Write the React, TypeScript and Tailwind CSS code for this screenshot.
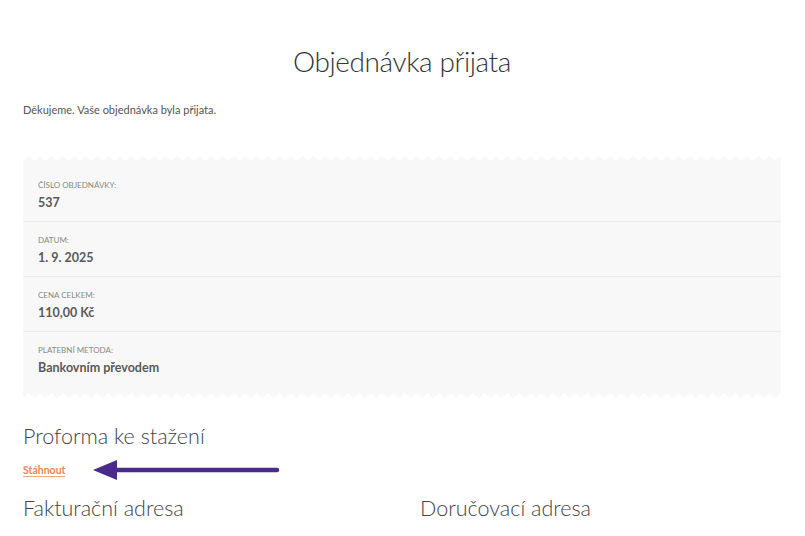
import React from "react";

function Zigzag({ flip }: { flip?: boolean }) {
  const w = 758;
  const p = 11.4;
  const n = Math.ceil(w / p);
  let d = `M0 6 `;
  for (let i = 0; i < n; i++) {
    const x0 = i * p;
    d += `L${(x0 + p / 2).toFixed(2)} 0.8 L${(x0 + p).toFixed(2)} 6 `;
  }
  d += `L${w} 6 Z`;
  return (
    <svg
      width={w}
      height={6}
      viewBox={`0 0 ${w} 6`}
      className={flip ? "block rotate-180" : "block"}
      preserveAspectRatio="none"
    >
      <path d={d} fill="#f8f8f8" />
    </svg>
  );
}

const rows = [
  { label: "Číslo objednávky:", value: "537" },
  { label: "Datum:", value: "1. 9. 2025" },
  { label: "Cena celkem:", value: "110,00 Kč" },
  { label: "Platební metoda:", value: "Bankovním převodem" },
];

export default function App() {
  return (
    <div
      className="relative w-[805px] h-[536px] overflow-hidden bg-white text-[#6d6d6d]"
      style={{ fontFamily: "Lato, 'Noto Sans', sans-serif" }}
    >
      <div className="pl-[23px] pr-[24px]">
        <h1 className="pt-[43px] text-center text-[28px] leading-[36px] font-light tracking-[-0.4px] text-[#333333]">
          Objednávka přijata
        </h1>
        <p className="mt-[23px] text-[11px] leading-[16px] text-[#555]">
          Děkujeme. Vaše objednávka byla přijata.
        </p>

        <div className="mt-[37px] w-[758px]">
          <Zigzag />
          <div className="bg-[#f8f8f8] py-[6px] px-[15px]">
            {rows.map((r, i) => (
              <div
                key={r.label}
                className={
                  "pt-[12px] pb-[10px] h-[55px] " +
                  (i < rows.length - 1 ? "border-b border-[#ececec] -mx-[15px] px-[15px]" : "")
                }
              >
                <div className="text-[8px] leading-[13px] uppercase text-[#888]">
                  {r.label}
                </div>
                <div className="mt-[2px] text-[12.5px] leading-[18px] font-bold text-[#5a5a5a]">
                  {r.value}
                </div>
              </div>
            ))}
          </div>
          <Zigzag flip />
        </div>

        <h2 className="mt-[22px] text-[21.5px] leading-[30px] font-light text-[#444]">
          Proforma ke stažení
        </h2>
        <a
          href="#"
          className="mt-[12px] block w-fit text-[10.5px] leading-[14px] font-bold text-[#f7844e] underline decoration-[#f7a67e] underline-offset-2"
        >
          Stáhnout
        </a>

        <div className="mt-[16px] flex">
          <h2 className="w-[397px] text-[21.5px] leading-[30px] font-light text-[#444]">
            Fakturační adresa
          </h2>
          <h2 className="text-[21.5px] leading-[30px] font-light text-[#444]">
            Doručovací adresa
          </h2>
        </div>
      </div>

      <svg
        className="absolute left-[90px] top-[458px]"
        width={192}
        height={24}
        viewBox="0 0 192 24"
      >
        <line x1={22} y1={12} x2={187} y2={12} stroke="#4a2a8a" strokeWidth={4.5} strokeLinecap="round" />
        <path d="M3 12 L27 2 L27 22 Z" fill="#4a2a8a" />
      </svg>
    </div>
  );
}
